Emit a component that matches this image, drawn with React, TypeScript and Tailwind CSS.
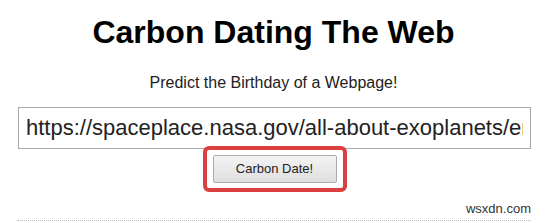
export default function App() {
  return (
    <div className="w-[547px] h-[223px] bg-white overflow-hidden font-['Liberation_Sans',Arial,sans-serif] text-[#222]">
      {/* Header */}
      <h1 className="mt-[14px] text-center text-[32px] leading-[37px] font-bold text-black">
        Carbon Dating The Web
      </h1>
      <p className="mt-[23px] text-center text-[16px] leading-[18px]">
        Predict the Birthday of a Webpage!
      </p>

      {/* URL form */}
      <div className="mt-[15px] pl-[18px] pr-[16px]">
        <input
          type="text"
          readOnly
          value="https://spaceplace.nasa.gov/all-about-exoplanets/en/"
          className="block w-full h-[42px] px-[7px] border border-[#a9a9a9] bg-white text-[22px] text-[#222] outline-none"
        />
        <div className="flex justify-center mt-[-3px]">
          <div className="px-[6px] py-[5px] border-4 border-[#d9403f] rounded-[6px]">
            <button className="block w-[124px] h-[28px] border border-[#adadad] rounded-[2px] bg-gradient-to-b from-[#f4f4f4] to-[#dedede] text-[13px] text-[#222]">
              Carbon Date!
            </button>
          </div>
        </div>
      </div>

      {/* Footer line */}
      <div className="mt-[9px] pl-[17px] pr-[16px]">
        <div className="flex justify-end text-[13px] leading-[15px] text-[#333]">wsxdn.com</div>
        <div className="mt-[4px] border-t border-dotted border-[#bbb]" />
      </div>
    </div>
  );
}
